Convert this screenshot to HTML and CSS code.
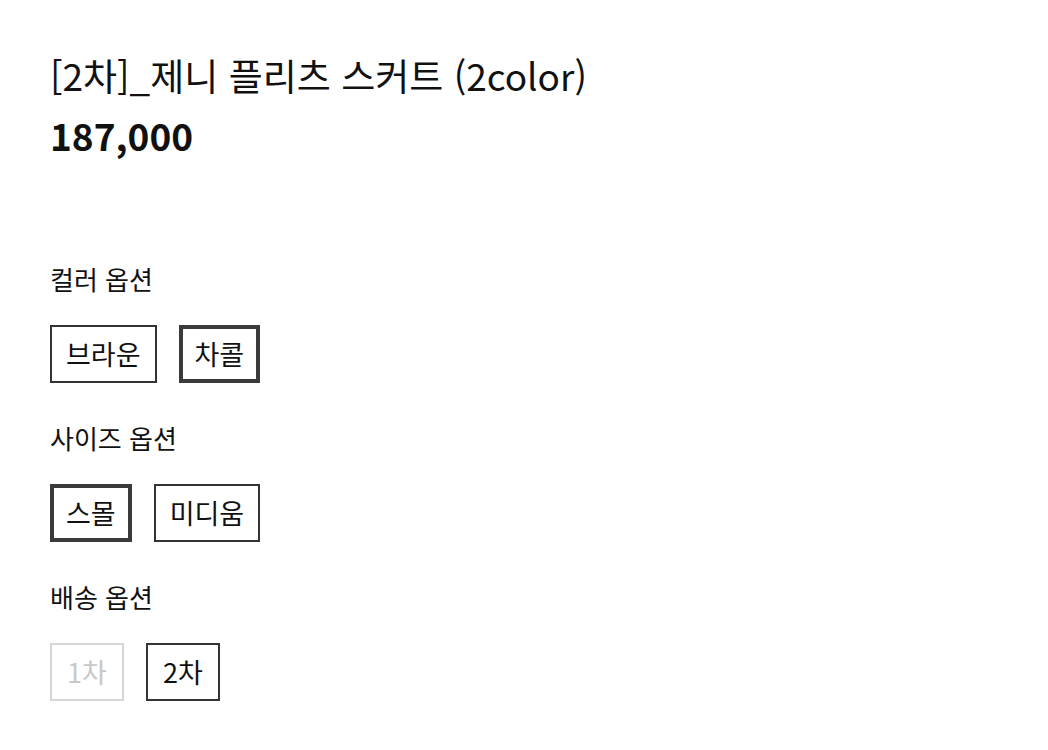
FILE: index.html
```html
<!DOCTYPE html>
<html lang="ko">
<head>
<meta charset="utf-8">
<link rel="stylesheet" href="styles.css">
</head>
<body>
<main class="product">
  <h1 class="title">[2차]_제니 플리츠 스커트 (2color)</h1>
  <p class="price">187,000</p>
  <section class="options">
    <div class="group">
      <h2 class="label">컬러 옵션</h2>
      <div class="choices">
        <button class="chip">브라운</button>
        <button class="chip selected">차콜</button>
      </div>
    </div>
    <div class="group">
      <h2 class="label">사이즈 옵션</h2>
      <div class="choices">
        <button class="chip selected">스몰</button>
        <button class="chip">미디움</button>
      </div>
    </div>
    <div class="group">
      <h2 class="label">배송 옵션</h2>
      <div class="choices">
        <button class="chip disabled">1차</button>
        <button class="chip">2차</button>
      </div>
    </div>
  </section>
</main>
</body>
</html>
```
FILE: styles.css
```css
* { box-sizing: border-box; }
html, body { margin: 0; background: #fff; }
body {
  font-family: "Noto Sans CJK KR", "Noto Sans", sans-serif;
  color: #111;
}
.product {
  padding: 50px 50px 0;
}
.title {
  margin: 0;
  font-size: 37px;
  font-weight: 400;
  line-height: 50px;
}
.price {
  margin: 8px 0 0;
  font-size: 37px;
  font-weight: 700;
  line-height: 54px;
}
.options {
  margin-top: 99px;
  display: flex;
  flex-direction: column;
  gap: 37px;
}
.label {
  margin: 0 0 28px;
  font-size: 26px;
  font-weight: 400;
  line-height: 36px;
}
.choices {
  display: flex;
  gap: 22px;
}
.chip {
  font-family: inherit;
  font-size: 27px;
  line-height: 36px;
  color: #111;
  background: #fff;
  border: 2px solid #333;
  height: 58px;
  min-width: 74px;
  padding: 0 14px;
  margin: 0;
  border-radius: 0;
}
.chip.selected {
  border-width: 4px;
  padding: 0 12px;
  border-color: #3a3a3a;
}
.chip.disabled {
  color: #c8c8c8;
  border-color: #d6d6d6;
}
```
